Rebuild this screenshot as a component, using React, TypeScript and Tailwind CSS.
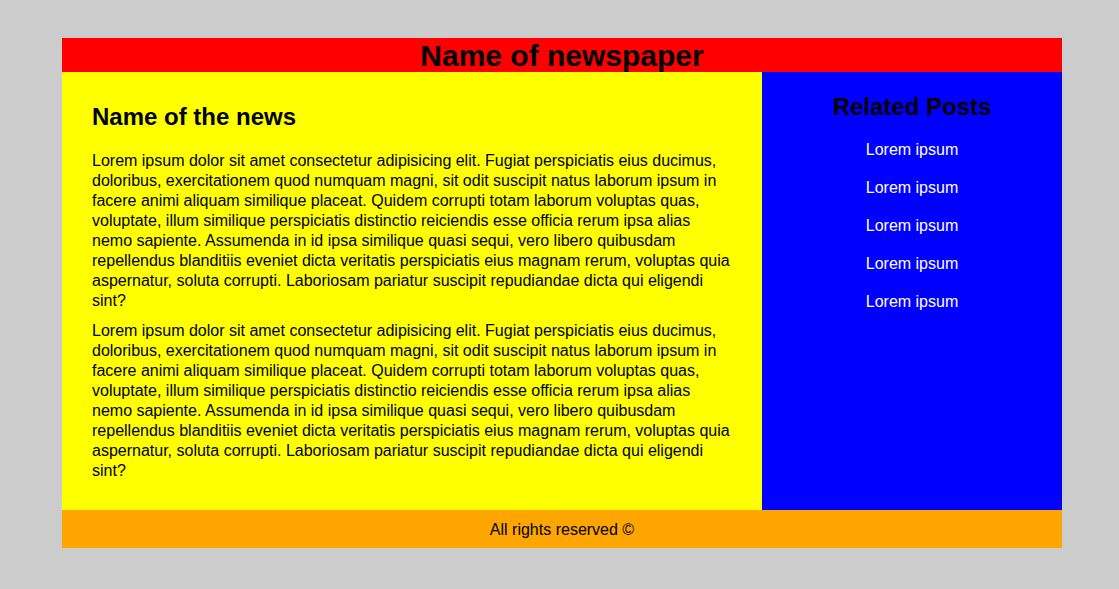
import React from "react";

const LOREM =
  "Lorem ipsum dolor sit amet consectetur adipisicing elit. Fugiat perspiciatis eius ducimus, doloribus, exercitationem quod numquam magni, sit odit suscipit natus laborum ipsum in facere animi aliquam similique placeat. Quidem corrupti totam laborum voluptas quas, voluptate, illum similique perspiciatis distinctio reiciendis esse officia rerum ipsa alias nemo sapiente. Assumenda in id ipsa similique quasi sequi, vero libero quibusdam repellendus blanditiis eveniet dicta veritatis perspiciatis eius magnam rerum, voluptas quia aspernatur, soluta corrupti. Laboriosam pariatur suscipit repudiandae dicta qui eligendi sint?";

export default function App() {
  return (
    <div
      className="min-h-screen bg-[#cccccc] pt-[38px] pl-[62px] text-black"
      style={{ fontFamily: '"Liberation Sans", Arial, sans-serif' }}
    >
      <div className="w-[1000px] flex flex-col">
        <header className="bg-[#ff0000] text-center pt-[1px]">
          <h1 className="text-[30px] leading-[33px] font-bold">Name of newspaper</h1>
        </header>
        <div className="flex">
          <main className="w-[700px] bg-[#ffff00] px-[30px] pt-[31px] pb-[29px] text-[16px] leading-[20px]">
            <h2 className="text-[24px] leading-[28px] font-bold mb-[20px]">Name of the news</h2>
            <p>{LOREM}</p>
            <p className="mt-[10px]">{LOREM}</p>
          </main>
          <aside className="w-[300px] bg-[#0000ff] pt-[21px] text-center">
            <h2 className="text-[24px] leading-[28px] font-bold mb-[20px]">Related Posts</h2>
            <ul className="flex flex-col gap-[20px] text-white text-[16px] leading-[18px]">
              <li>Lorem ipsum</li>
              <li>Lorem ipsum</li>
              <li>Lorem ipsum</li>
              <li>Lorem ipsum</li>
              <li>Lorem ipsum</li>
            </ul>
          </aside>
        </div>
        <footer className="bg-[#ffa500] pt-[11px] pb-[9px] text-center text-[16px] leading-[18px]">
          All rights reserved ©
        </footer>
      </div>
    </div>
  );
}
